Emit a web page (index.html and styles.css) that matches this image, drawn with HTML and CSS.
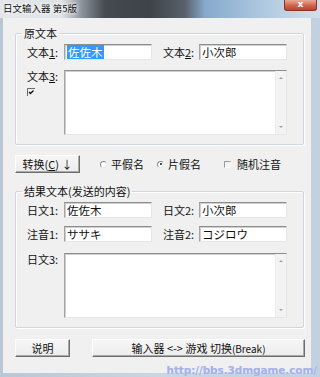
FILE: index.html
```html
<!DOCTYPE html>
<html lang="zh">
<head>
<meta charset="utf-8">
<title>日文输入器 第5版</title>
<link rel="stylesheet" href="styles.css">
</head>
<body>
<div class="window">
  <div class="titlebar">
    <span class="title">日文输入器 第5版</span>
    <span class="close">x</span>
  </div>
  <div class="client">
    <fieldset class="group g1">
      <legend>原文本</legend>
      <div class="grid g1grid">
        <label class="lbl">文本<u>1</u>:</label>
        <div class="edit"><span class="sel">佐佐木</span></div>
        <span></span>
        <label class="lbl">文本<u>2</u>:</label>
        <div class="edit">小次郎</div>
        <div class="lblcol">
          <label class="lbl top">文本<u>3</u>:</label>
          <span class="chk">
            <svg width="8" height="8" viewBox="0 0 8 8"><path d="M0.5 8V0.5H8" fill="none" stroke="#6a6a6a" stroke-width="1"/><path d="M2 4l1.5 1.5L6.5 2.5" fill="none" stroke="#111" stroke-width="1.3"/></svg>
          </span>
        </div>
        <div class="memo">
          <div class="sb"><span class="arr up"></span><span class="arr down"></span></div>
        </div>
      </div>
    </fieldset>

    <div class="midrow">
      <button class="btn btn-conv">转换(<u>C</u>) ↓</button>
      <span class="opt r1"><span class="radio"></span>平假名</span>
      <span class="opt r2"><span class="radio on"></span>片假名</span>
      <span class="opt c1"><span class="cbox"></span>随机注音</span>
    </div>

    <fieldset class="group g2">
      <legend>结果文本(发送的内容)</legend>
      <div class="grid g2grid">
        <label class="lbl">日文1:</label>
        <div class="edit">佐佐木</div>
        <span></span>
        <label class="lbl">日文2:</label>
        <div class="edit">小次郎</div>
        <label class="lbl">注音1:</label>
        <div class="edit">ササキ</div>
        <span></span>
        <label class="lbl">注音2:</label>
        <div class="edit">コジロウ</div>
        <div class="lblcol">
          <label class="lbl top">日文3:</label>
        </div>
        <div class="memo">
          <div class="sb"><span class="arr up"></span><span class="arr down"></span></div>
        </div>
      </div>
    </fieldset>

    <div class="btnrow">
      <button class="btn btn-help">说明</button>
      <button class="btn btn-switch">输入器 &lt;-&gt; 游戏 切换<span class="brk">(Break)</span></button>
    </div>
  </div>
  <div class="watermark">http://bbs.3dmgame.com/</div>
</div>
</body>
</html>
```

FILE: styles.css
```css
html, body {
  margin: 0;
  padding: 0;
}
body {
  width: 320px;
  height: 377px;
  overflow: hidden;
  font-family: "Noto Sans CJK SC", "Noto Sans", sans-serif;
  font-size: 11px;
  color: #111;
}
.window {
  position: relative;
  width: 320px;
  height: 377px;
  display: flex;
  flex-direction: column;
  background: linear-gradient(to right, #b9c7d6, #c9d6e3 50%, #c2d1df);
}
.titlebar {
  height: 18px;
  flex: none;
  display: flex;
  align-items: flex-start;
  background: linear-gradient(to right, #e3e7ea 0, #dfe3e6 62px, #8c929a 82px, #454a51 105px, #3e434a 150px, #59616b 185px, #86a9cb 205px, #a1bfdc 245px, #bcd0e3 280px, #d2dfea 320px);
}
.title {
  font-size: 9.5px;
  line-height: 11px;
  margin: 3px 0 0 3px;
  color: #111;
  text-shadow: 0 0 3px #fff, 0 0 5px #fff;
  white-space: nowrap;
}
.close {
  margin-left: auto;
  margin-right: 3px;
  width: 33px;
  height: 11px;
  box-sizing: border-box;
  border: 1px solid #8a3426;
  border-top: none;
  border-radius: 0 0 3px 3px;
  background: linear-gradient(#e9a998, #d0654f 55%, #c0402d);
  color: #fff;
  font-family: "DejaVu Sans", sans-serif;
  font-weight: bold;
  font-size: 9px;
  line-height: 9px;
  text-align: center;
}
.client {
  flex: 1;
  min-height: 0;
  margin: 0 9px 4px 3px;
  background: #f0f0f0;
  display: flex;
  flex-direction: column;
}
.group {
  margin: 9px 7px 0 12px;
  padding: 4px 0 9px 0;
  border: 1px solid #d0d6db;
  border-radius: 2px;
  box-shadow: inset 1px 1px 0 #fff, 1px 1px 0 #fff;
  min-width: 0;
}
.group legend {
  margin-left: 6px;
  padding: 0 2px;
  font-size: 11px;
  line-height: 13px;
}
.g2 {
  margin-top: 12px;
  padding-top: 4px;
  padding-bottom: 12px;
}
.grid {
  display: grid;
  grid-template-columns: 37px 88px 11px 36px 88px;
  margin-left: 11px;
}
.g1grid {
  grid-template-rows: 16px 65px;
  row-gap: 10px;
}
.g2grid {
  grid-template-rows: 16px 16px 65px;
  row-gap: 8px;
}
.g2grid .memo {
  margin-top: 3px;
}
.lbl {
  display: flex;
  align-items: center;
  font-size: 11px;
  white-space: nowrap;
}
.lbl.top {
  align-items: flex-start;
  line-height: 12px;
  height: 12px;
}
.lblcol {
  grid-column: 1;
  display: flex;
  flex-direction: column;
  align-items: flex-start;
}
.g2grid .lblcol {
  padding-top: 3px;
}
.chk {
  display: block;
  width: 8px;
  height: 8px;
  margin-top: 6px;
  line-height: 0;
}
.edit {
  box-sizing: border-box;
  height: 16px;
  background: #fff;
  border-top: 1px solid #8d8d8d;
  border-left: 1px solid #a4a4a4;
  border-right: 1px solid #e6e6e6;
  border-bottom: 1px solid #e6e6e6;
  box-shadow: inset 1px 1px 0 #cfcfcf;
  padding-left: 2px;
  font-size: 11.5px;
  line-height: 14px;
  white-space: nowrap;
  overflow: hidden;
}
.sel {
  background: #3399ff;
  color: #fff;
  padding: 0 1px;
}
.memo {
  grid-column: 2 / -1;
  height: 65px;
  box-sizing: border-box;
  background: #fff;
  border-top: 1px solid #8d8d8d;
  border-left: 1px solid #a4a4a4;
  border-right: 1px solid #e6e6e6;
  border-bottom: 1px solid #e6e6e6;
  box-shadow: inset 1px 1px 0 #cfcfcf;
  display: flex;
  justify-content: flex-end;
}
.sb {
  width: 10px;
  background: #f3f3f3;
  border-left: 1px solid #ececec;
  display: flex;
  flex-direction: column;
  justify-content: space-between;
  align-items: center;
  padding: 6px 0 6px;
}
.arr {
  width: 0;
  height: 0;
  border-left: 2px solid transparent;
  border-right: 2px solid transparent;
}
.arr.up {
  border-bottom: 2px solid #a0a0a0;
}
.arr.down {
  border-top: 2px solid #a0a0a0;
}
.midrow {
  display: flex;
  align-items: center;
  height: 18px;
  margin: 10px 0 0 12px;
}
.btn {
  box-sizing: border-box;
  height: 18px;
  padding: 0;
  font-family: "Noto Sans CJK SC", "Noto Sans", sans-serif;
  font-size: 11px;
  line-height: 15px;
  color: #111;
  background: linear-gradient(#f6f6f6, #ececec);
  border-top: 1px solid #fff;
  border-left: 1px solid #fff;
  border-right: 1px solid #6d6d6d;
  border-bottom: 1px solid #6d6d6d;
  box-shadow: inset -1px -1px 0 #a9a9a9;
  white-space: nowrap;
}
.btn-conv {
  width: 65px;
}
.opt {
  display: flex;
  align-items: center;
  gap: 4px;
  font-size: 11px;
  white-space: nowrap;
}
.r1 {
  margin-left: 20px;
}
.r2 {
  margin-left: 13px;
}
.c1 {
  margin-left: 23px;
  gap: 6px;
}
.radio {
  position: relative;
  width: 7px;
  height: 7px;
  box-sizing: border-box;
  border-radius: 50%;
  border: 1px solid;
  border-color: #8a8a8a #e8e8e8 #e8e8e8 #8a8a8a;
  background: #fff;
}
.radio.on::after {
  content: "";
  position: absolute;
  left: 1.5px;
  top: 1.5px;
  width: 2px;
  height: 2px;
  border-radius: 50%;
  background: #111;
}
.cbox {
  width: 7px;
  height: 7px;
  box-sizing: border-box;
  border-top: 1px solid #9a9a9a;
  border-left: 1px solid #9a9a9a;
  border-right: 1px solid #f8f8f8;
  border-bottom: 1px solid #f8f8f8;
  background: #f4f4f4;
}
.btnrow {
  display: flex;
  margin: 11px 0 0 12px;
}
.btn-help {
  width: 55px;
}
.btn-switch {
  width: 213px;
  margin-left: 22px;
}
.brk {
  font-size: 10px;
}
.watermark {
  position: absolute;
  right: 3px;
  bottom: 1px;
  font-family: "DejaVu Sans", sans-serif;
  font-weight: bold;
  font-size: 10.5px;
  line-height: 12px;
  color: #a6b0ea;
  text-shadow: 0 0 1px #d4dcf8;
  letter-spacing: -0.1px;
}
```
